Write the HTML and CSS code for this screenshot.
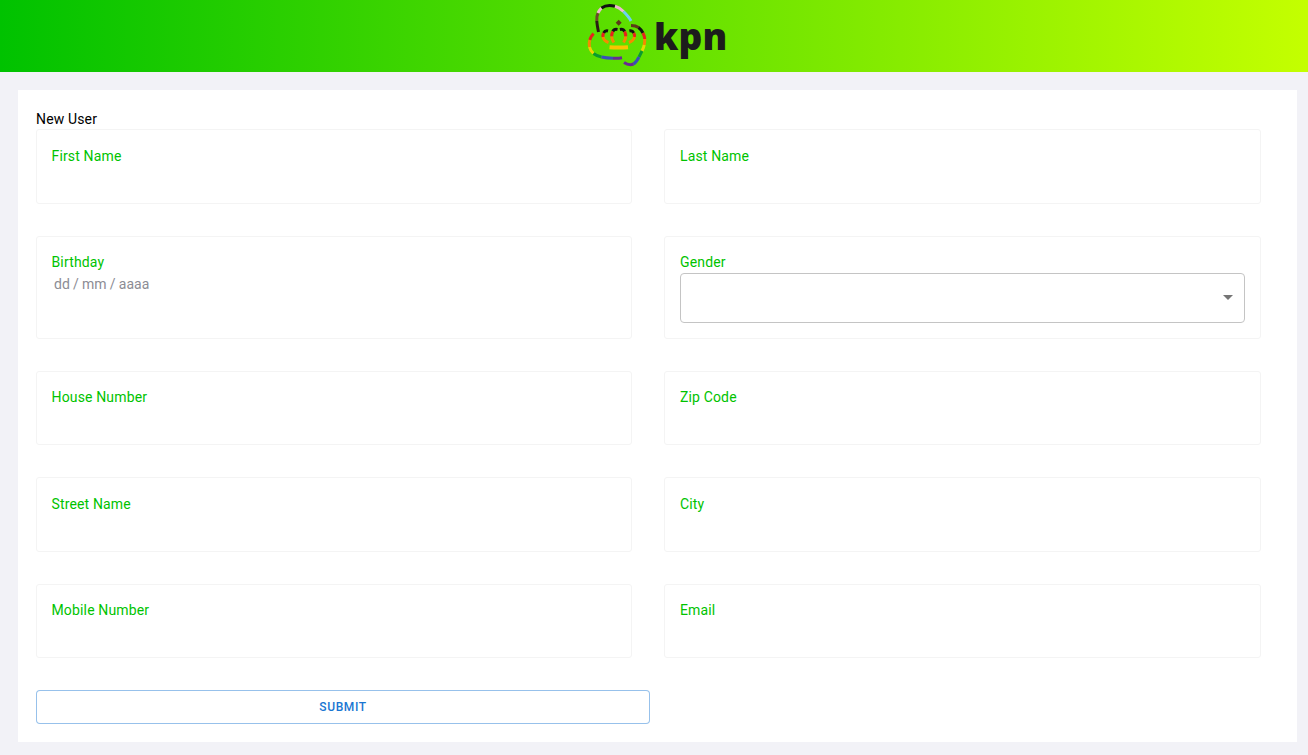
FILE: index.html
```html
<!DOCTYPE html>
<html lang="en">
<head>
<meta charset="utf-8">
<title>New User</title>
<link rel="stylesheet" href="styles.css">
</head>
<body>
<header class="topbar">
  <div class="brand">
    <svg class="mark" width="62" height="66" viewBox="586 2 62 66" fill="none" stroke-width="3" aria-hidden="true">
      <path d="M597.5 32 C596.5 27 596 24 595.8 21" stroke="#2a1e12"/>
      <path d="M595.8 21 C595.6 18 596 15 597 13" stroke="#6b4a2a"/>
      <path d="M597 13 C597.8 11 599 9.5 600.5 8" stroke="#f0b8d0"/>
      <path d="M600.5 8 C604 5.5 609 5 614 6.3" stroke="#111"/>
      <path d="M614 6.3 C617 7 620 9 622.5 11.5" stroke="#f0b8d0"/>
      <path d="M622.5 11.5 C625.5 14.5 628.5 18 630 21" stroke="#6fd0f0"/>
      <path d="M630 25.5 C633 25.5 635.5 26 637.5 27.5" stroke="#5c3a1a"/>
      <path d="M637.5 27.5 C639.5 29 641 31 642 33" stroke="#111"/>
      <path d="M642 33 C643 35 643.6 37 643.7 39" stroke="#e8201c"/>
      <path d="M643.7 39 C643.8 41 643.6 43 643.2 45" stroke="#f58a00"/>
      <path d="M643.2 45 C642.8 47 642 49 641 51" stroke="#e8d800"/>
      <path d="M641 51 C640 53 639 55 638 57" stroke="#0b9a30"/>
      <path d="M638 57 C636.5 60 635 62.5 632.5 64" stroke="#3a4fb8"/>
      <path d="M632.5 64 C629 65.5 626 64.5 623 62.5" stroke="#6a2a96"/>
      <path d="M592.5 33.5 C590.8 35.5 589.5 37.5 588.8 40" stroke="#e8201c"/>
      <path d="M588.8 40 C588 42 588 44.5 588.5 47" stroke="#f58a00"/>
      <path d="M588.5 47 C589 49.5 590.5 51.5 592.5 53.5" stroke="#f2d200"/>
      <path d="M592.5 53.5 C595 55.5 597.5 56.5 600.5 57" stroke="#0b9a30"/>
      <path d="M600.5 57 C604 57.8 608 58.2 612 58.3" stroke="#3a4fb8"/>
      <path d="M612 58.3 C615 58.4 618 58.4 621 57.8" stroke="#6a2a96"/>
      <path d="M617.7 19.8 L620.7 22.8 L617.7 25.8 L614.7 22.8 Z" fill="#5c3a1a" stroke="none"/>
      <path d="M616.5 29.5 C614 29 612.5 30 611.8 31.5" stroke="#111"/>
      <path d="M611.8 31.5 C611 33 610.6 34.5 610.7 36.5" stroke="#e8201c"/>
      <path d="M610.7 36.5 C610.8 38.5 611.5 40.5 612.8 42.5" stroke="#f58a00"/>
      <path d="M618.9 29.5 C621.4 29 622.9 30 623.6 31.5" stroke="#111"/>
      <path d="M623.6 31.5 C624.4 33 624.8 34.5 624.7 36.5" stroke="#e8201c"/>
      <path d="M624.7 36.5 C624.6 38.5 623.9 40.5 622.6 42.5" stroke="#f58a00"/>
      <path d="M607 31 C605 30.5 603.5 31.3 602.6 33" stroke="#111"/>
      <path d="M602.6 33 C602 34.2 601.8 35.5 602 37" stroke="#e8201c"/>
      <path d="M602 37 C602.5 39.5 604.5 41.5 607.5 42.5" stroke="#f58a00"/>
      <path d="M628.4 31 C630.4 30.5 631.9 31.3 632.8 33" stroke="#111"/>
      <path d="M632.8 33 C633.4 34.2 633.6 35.5 633.4 37" stroke="#e8201c"/>
      <path d="M633.4 37 C632.9 39.5 630.9 41.5 627.9 42.5" stroke="#f58a00"/>
      <path d="M608.5 47.2 Q617.7 48 627 47.2" stroke="#f7c400" stroke-width="4"/>
    </svg>
    <span class="wordmark">kpn</span>
  </div>
</header>
<main class="page">
  <section class="card">
    <h1 class="title">New User</h1>
    <form class="form">
      <div class="field"><label class="label label-left">First Name</label></div>
      <div class="field"><label class="label">Last Name</label></div>
      <div class="field field-tall"><label class="label label-left">Birthday</label><span class="date">dd / mm / aaaa</span></div>
      <div class="field field-tall"><label class="label">Gender</label>
        <div class="select"><svg class="caret" width="10" height="5" viewBox="0 0 10 5" aria-hidden="true"><path d="M0 0 L10 0 L5 5 Z"/></svg></div>
      </div>
      <div class="field"><label class="label label-left">House Number</label></div>
      <div class="field"><label class="label">Zip Code</label></div>
      <div class="field"><label class="label label-left">Street Name</label></div>
      <div class="field"><label class="label">City</label></div>
      <div class="field"><label class="label label-left">Mobile Number</label></div>
      <div class="field"><label class="label">Email</label></div>
    </form>
    <button class="submit" type="button">SUBMIT</button>
  </section>
</main>
</body>
</html>
```

FILE: styles.css
```css
* { box-sizing: border-box; }
html, body { margin: 0; height: 100%; }
body {
  background: #f2f2f7;
  font-family: Roboto, "Liberation Sans", sans-serif;
  font-size: 14px;
  letter-spacing: 0.15px;
  color: #000;
  overflow: hidden;
}
.topbar {
  height: 72px;
  background: linear-gradient(90deg, #00c200 0%, #c4ff00 100%);
  display: flex;
  justify-content: center;
}
.brand {
  display: flex;
  align-items: flex-start;
  width: 142px;
  padding-top: 2px;
  margin-left: 8px;
}
.mark { flex: none; }
.wordmark {
  font-family: "Open Sans", sans-serif;
  font-weight: 800;
  font-size: 37px;
  line-height: 50px;
  letter-spacing: 0.2px;
  color: #1c1c1c;
  margin: 9px 0 0 5px;
}
.page { padding: 18px 11px 13px 18px; }
.card {
  background: #fff;
  height: 652px;
  padding: 19px 36px 18px 18px;
}
.title {
  margin: 0;
  font-size: 14px;
  font-weight: 400;
  line-height: 20.4px;
  color: #000;
}
.form {
  display: grid;
  grid-template-columns: 596px 597px;
  column-gap: 32px;
  row-gap: 32px;
}
.field {
  border: 1px solid #f4f4f4;
  border-radius: 3px;
  padding: 15.6px 15px 15px;
  height: 74.4px;
}
.field-tall { height: 103px; }
.label {
  display: block;
  color: #00c300;
  font-size: 14px;
  line-height: 20.4px;
}
.label-left { margin-left: -0.5px; }
.date {
  display: block;
  margin-left: 2px;
  color: #8c8c94;
  font-size: 14px;
  line-height: 23px;
  letter-spacing: 0;
  word-spacing: -0.25px;
}
.select {
  height: 50px;
  border: 1px solid #c4c4c4;
  border-radius: 4px;
  display: flex;
  align-items: center;
  justify-content: flex-end;
  padding-right: 11px;
}
.caret { fill: #757575; display: block; }
.submit {
  display: block;
  width: 614px;
  height: 34px;
  margin-top: 32px;
  background: #fff;
  border: 1px solid rgba(25, 118, 210, 0.45);
  border-radius: 4px;
  color: #1976d2;
  font-family: Roboto, "Liberation Sans", sans-serif;
  font-size: 12px;
  font-weight: 500;
  letter-spacing: 0.6px;
}
```
